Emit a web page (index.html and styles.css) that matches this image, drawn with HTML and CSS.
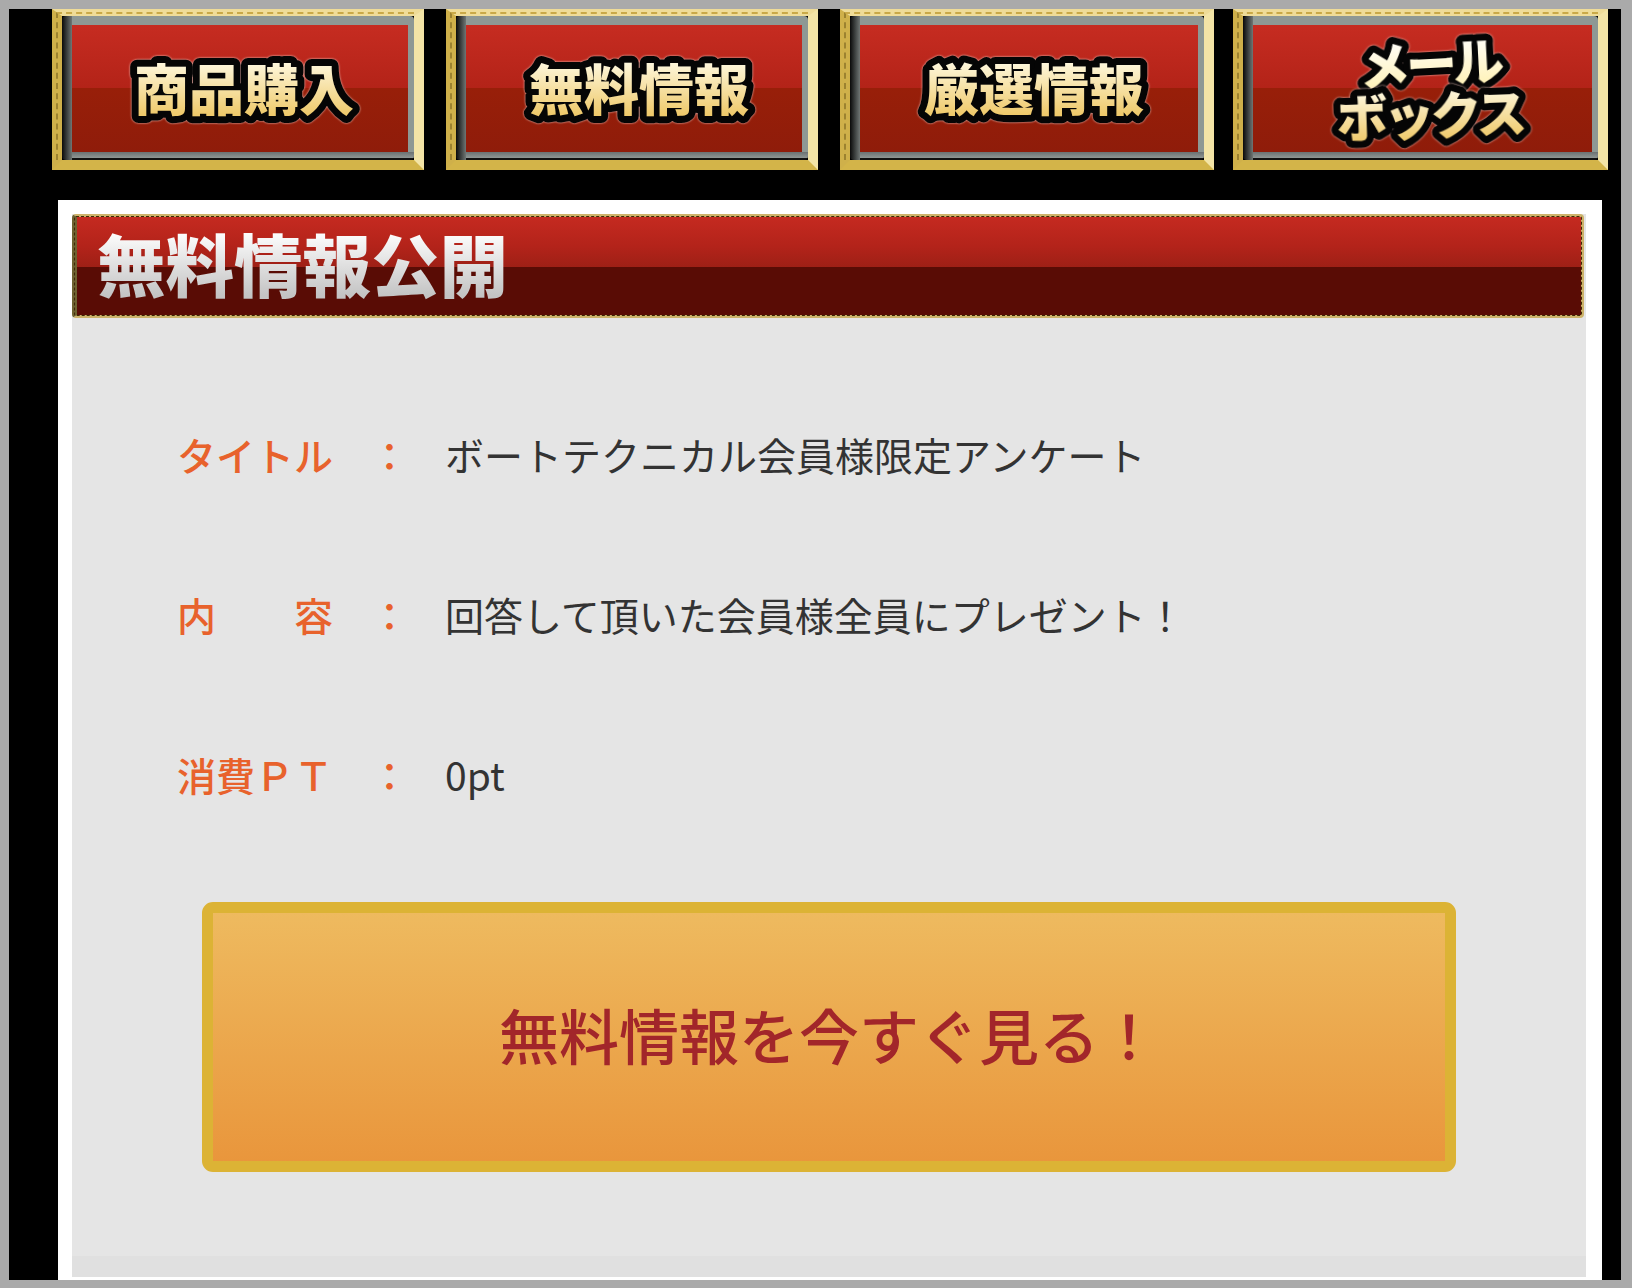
FILE: index.html
```html
<!DOCTYPE html>
<html lang="ja">
<head>
    <meta charset="UTF-8">
    <meta name="viewport" content="width=device-width, initial-scale=1.0">
    <title>無料情報公開</title>
    <link rel="stylesheet" href="styles.css">
</head>
<body>
    <svg class="defs" width="0" height="0" aria-hidden="true">
        <defs>
            <linearGradient id="gold" x1="0" y1="0" x2="0" y2="1">
                <stop offset="0.15" stop-color="#fffbe6"/>
                <stop offset="0.85" stop-color="#efca6c"/>
            </linearGradient>
            <linearGradient id="cream" x1="0" y1="0" x2="0" y2="1">
                <stop offset="0.15" stop-color="#ffffff"/>
                <stop offset="0.85" stop-color="#fff2b8"/>
            </linearGradient>
        </defs>
    </svg>

    <div class="page">
        <nav class="nav-items">
            <a href="#" class="nav-btn"><span class="nav-face">
                <svg class="nav-label" viewBox="0 0 336 127"><text x="172" y="85" text-anchor="middle" fill="url(#gold)">商品購入</text></svg>
            </span></a>
            <a href="#" class="nav-btn"><span class="nav-face">
                <svg class="nav-label" viewBox="0 0 336 127"><text x="173" y="85" text-anchor="middle" fill="url(#gold)">無料情報</text></svg>
            </span></a>
            <a href="#" class="nav-btn"><span class="nav-face">
                <svg class="nav-label" viewBox="0 0 336 127"><text x="173" y="85" text-anchor="middle" fill="url(#gold)">厳選情報</text></svg>
            </span></a>
            <a href="#" class="nav-btn"><span class="nav-face">
                <svg class="nav-label" viewBox="0 0 336 127"><text class="small" x="176" y="58" text-anchor="middle" fill="url(#cream)" transform="rotate(-3 176 58)">メール</text><text class="small" x="176" y="110" text-anchor="middle" fill="url(#gold)" transform="rotate(-2 176 110)">ボックス</text></svg>
            </span></a>
        </nav>

        <main class="panel">
            <div class="panel-inner">
                <h2 class="panel-title"><span class="panel-title-text">無料情報公開</span></h2>

                <dl class="info-list">
                    <div class="info-row">
                        <dt>タイトル</dt>
                        <span class="info-colon">：</span>
                        <dd>ボートテクニカル会員様限定アンケート</dd>
                    </div>
                    <div class="info-row">
                        <dt>内容</dt>
                        <span class="info-colon">：</span>
                        <dd>回答して頂いた会員様全員にプレゼント！</dd>
                    </div>
                    <div class="info-row">
                        <dt>消費ＰＴ</dt>
                        <span class="info-colon">：</span>
                        <dd>0pt</dd>
                    </div>
                </dl>

                <a href="#" class="view-button">無料情報を今すぐ見る！</a>
            </div>
        </main>
    </div>
</body>
</html>
```

FILE: styles.css
```css
html, body {
    margin: 0;
    height: 100%;
}

body {
    font-family: "Noto Sans CJK JP", "Noto Sans", sans-serif;
    background-color: #aaa;
    box-sizing: border-box;
    padding: 9px 11px 8px 9px;
    overflow: hidden;
}

.defs {
    position: absolute;
}

.page {
    background-color: #000;
    height: 100%;
    overflow: hidden;
}

.nav-items {
    display: flex;
    margin-left: 43px;
    height: 161px;
}

.nav-btn {
    display: block;
    position: relative;
    flex: none;
    width: 372px;
    box-sizing: border-box;
    border-style: solid;
    border-width: 7px 10px 10px 10px;
    border-color: #efdc98 #f3e4a6 #d3b449 #cfb04a;
    text-decoration: none;
}

/* dotted studs along the top and left of the gold frame */
.nav-btn::before {
    content: "";
    position: absolute;
    top: -4px;
    left: -6px;
    right: 0;
    bottom: 0;
    border-top: 2px dashed #c9a948;
    border-left: 2px dashed #9c8230;
}

.nav-btn + .nav-btn {
    margin-left: 22px;
}

.nav-btn:nth-child(3) {
    width: 374px;
}

.nav-btn:nth-child(4) {
    width: 375px;
    margin-left: 19px;
}

.nav-face {
    display: block;
    box-sizing: border-box;
    height: 100%;
    padding: 9px 6px 8px 10px;
    border-radius: 4px;
    background:
        linear-gradient(90deg, #0a0a0a, #6f7674) left / 10px 100% no-repeat,
        linear-gradient(#6b7172, #8d9492 70%, #111 70%) bottom / 100% 8px no-repeat,
        #8e9894;
}

.nav-label {
    display: block;
    width: 100%;
    height: 100%;
    overflow: visible;
    background: linear-gradient(#c62c21, #b32318 50%, #981f09 50%, #8f1c0a);
}

.nav-label text {
    font-family: "Noto Sans CJK JP", sans-serif;
    font-size: 55px;
    font-weight: 900;
    stroke: #050505;
    stroke-width: 14px;
    stroke-linejoin: round;
    paint-order: stroke fill;
    filter: drop-shadow(0 0 1px #f0c8c0);
}

.nav-label text.small {
    font-size: 51px;
    letter-spacing: -4px;
    stroke-width: 14px;
}

.panel {
    box-sizing: border-box;
    height: 1080px;
    margin: 30px 19px 0 49px;
    padding: 14px 16px 3px 14px;
    background-color: #fff;
}

.panel-inner {
    height: 100%;
    overflow: hidden;
    background: linear-gradient(#e5e5e5 98%, #e0e0e0 98%);
}

.panel-title {
    box-sizing: border-box;
    height: 104px;
    margin: 0 2px 0 0;
    padding-left: 20px;
    border: 3px solid #cdb36a;
    border-left: 5px solid #6e6230;
    border-radius: 4px;
    outline: 1px dashed #3d2a08;
    outline-offset: -3px;
    background: linear-gradient(#c52a20, #b3231a 30%, #9e2016 51%, #590c05 51%, #590c05);
    font-size: 68.5px;
    font-weight: 900;
    line-height: 92px;
}

.panel-title-text {
    display: inline-block;
    background: linear-gradient(#fff 15%, #c4c4c4 85%);
    -webkit-background-clip: text;
    background-clip: text;
    color: transparent;
}

.info-list {
    margin: 56px 0 48px;
}

.info-row {
    display: flex;
    align-items: center;
    height: 160px;
    padding-left: 105px;
    font-size: 39px;
    line-height: 1.2;
}

.info-row dt {
    width: 156px;
    color: #e8622c;
    font-weight: 500;
    white-space: nowrap;
    text-align-last: justify;
}

.info-colon {
    width: 39px;
    margin-left: 37px;
    color: #e8622c;
    font-weight: 500;
}

.info-row dd {
    margin: 0 0 0 36px;
    color: #333;
}

.view-button {
    display: block;
    box-sizing: border-box;
    width: 1254px;
    height: 270px;
    margin-left: 130px;
    border: 11px solid #dcb335;
    border-radius: 11px;
    background: linear-gradient(#eeba5f, #e9963c);
    color: #a2262a;
    font-size: 60px;
    font-weight: 500;
    line-height: 242px;
    text-align: center;
    text-decoration: none;
}
```
